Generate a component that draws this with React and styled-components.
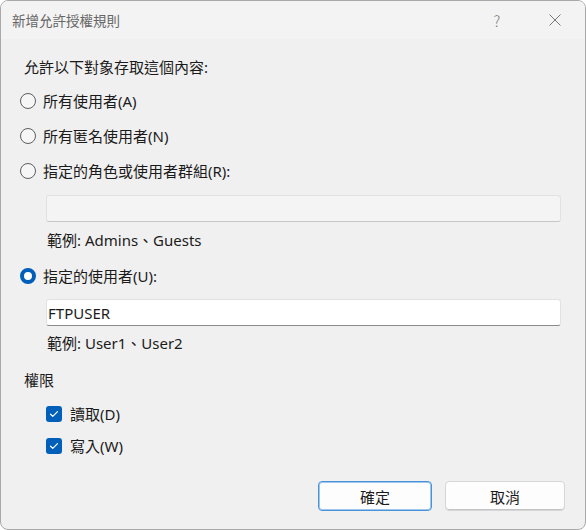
import React from 'react'
import styled, { createGlobalStyle } from 'styled-components'

const GlobalStyle = createGlobalStyle`
  html, body {
    margin: 0;
    padding: 0;
    background: #ffffff;
  }
  * {
    box-sizing: border-box;
  }
`

const Window = styled.div`
  width: 586px;
  height: 530px;
  border: 1px solid #a9a9a9;
  border-radius: 8px;
  background: #f0f0f0;
  overflow: hidden;
  display: flex;
  flex-direction: column;
  font-family: 'Noto Sans', 'Noto Sans CJK TC', sans-serif;
  font-size: 15px;
  color: #1b1b1b;
`

const TitleBar = styled.div`
  height: 38px;
  flex: none;
  display: flex;
  align-items: center;
  padding-left: 11px;
  padding-right: 7px;
  background: #f3f3f3;
  color: #666666;
  font-family: 'Noto Sans CJK TC', sans-serif;
  font-size: 13.5px;
`

const Title = styled.div`
  flex: 1;
  line-height: 20px;
`

const CaptionButton = styled.div`
  width: 46px;
  height: 30px;
  display: flex;
  align-items: center;
  justify-content: center;
  margin-left: ${(p) => p.$gap || 0}px;
  color: #777;
  font-size: 15px;
  font-weight: 300;
`

const Body = styled.div`
  flex: 1;
  display: flex;
  flex-direction: column;
  padding: 0 25px 18px 19px;
`

const Line = styled.div`
  display: flex;
  align-items: center;
  height: 20px;
  line-height: 20px;
  margin-top: ${(p) => p.$top}px;
  padding-left: ${(p) => p.$indent || 0}px;
  white-space: nowrap;
`

const RadioDot = styled.span`
  width: 16px;
  height: 16px;
  flex: none;
  border-radius: 50%;
  margin-right: 7px;
  border: ${(p) => (p.$checked ? '4.5px solid #005fb8' : '1px solid #5e5e5e')};
  background: ${(p) => (p.$checked ? '#ffffff' : '#f6f6f6')};
`

const Field = styled.div`
  height: ${(p) => p.$h}px;
  margin-top: ${(p) => p.$top}px;
  margin-left: 26px;
  margin-right: -1px;
  display: flex;
  align-items: center;
  padding-left: 1px;
  border: 1px solid #e2e2e2;
  border-bottom: 1px solid ${(p) => (p.$disabled ? '#c6c6c6' : '#8a8a8a')};
  border-radius: 3px;
  background: ${(p) => (p.$disabled ? '#f4f4f4' : '#ffffff')};
  line-height: 20px;
`

const Box = styled.span`
  width: 16px;
  height: 16px;
  flex: none;
  border-radius: 3px;
  background: #005fb8;
  margin-right: 8px;
  display: flex;
  align-items: center;
  justify-content: center;
`

const Footer = styled.div`
  margin-top: auto;
  display: flex;
  justify-content: flex-end;
  gap: 13px;
  margin-right: -5px;
`

const Button = styled.button`
  width: ${(p) => p.$w}px;
  height: 30px;
  border-radius: 4px;
  background: #fdfdfd;
  font-family: 'Noto Sans CJK TC', sans-serif;
  font-size: 15px;
  color: #1b1b1b;
  border: 1px solid ${(p) => (p.$primary ? '#4a93d8' : '#d6d6d6')};
  box-shadow: ${(p) => (p.$primary ? 'inset 0 0 0 1px #9cc6ee' : 'inset 0 -1px 0 #c4c4c4')};
  padding: 0;
`

const Check = () => (
  <svg width="10" height="8" viewBox="0 0 10 8">
    <path d="M1.5 4.2 L3.8 6.3 L8.5 1.6" fill="none" stroke="#ffffff" strokeWidth="1.2" strokeLinecap="round" strokeLinejoin="round" />
  </svg>
)

const Close = () => (
  <svg width="12" height="12" viewBox="0 0 12 12">
    <path d="M0.5 0.5 L11.5 11.5 M11.5 0.5 L0.5 11.5" stroke="#777" strokeWidth="1" fill="none" />
  </svg>
)

const radios = ['所有使用者(A)', '所有匿名使用者(N)', '指定的角色或使用者群組(R):']

export default function App() {
  return (
    <>
      <GlobalStyle />
      <Window>
        <TitleBar>
          <Title>新增允許授權規則</Title>
          <CaptionButton>?</CaptionButton>
          <CaptionButton $gap={12}>
            <Close />
          </CaptionButton>
        </TitleBar>
        <Body>
          <Line $top={18} $indent={4}>允許以下對象存取這個內容:</Line>
          {radios.map((label, i) => (
            <Line key={label} $top={i === 0 ? 14 : 15}>
              <RadioDot />
              {label}
            </Line>
          ))}
          <Field $top={14} $h={27} $disabled />
          <Line $top={8} $indent={27}>範例: Admins、Guests</Line>
          <Line $top={16}>
            <RadioDot $checked />
            指定的使用者(U):
          </Line>
          <Field $top={13} $h={27}>FTPUSER</Field>
          <Line $top={7} $indent={27}>範例: User1、User2</Line>
          <Line $top={17} $indent={4}>權限</Line>
          <Line $top={14} $indent={26}>
            <Box>
              <Check />
            </Box>
            讀取(D)
          </Line>
          <Line $top={12} $indent={26}>
            <Box>
              <Check />
            </Box>
            寫入(W)
          </Line>
          <Footer>
            <Button $primary $w={114}>確定</Button>
            <Button $w={120}>取消</Button>
          </Footer>
        </Body>
      </Window>
    </>
  )
}
